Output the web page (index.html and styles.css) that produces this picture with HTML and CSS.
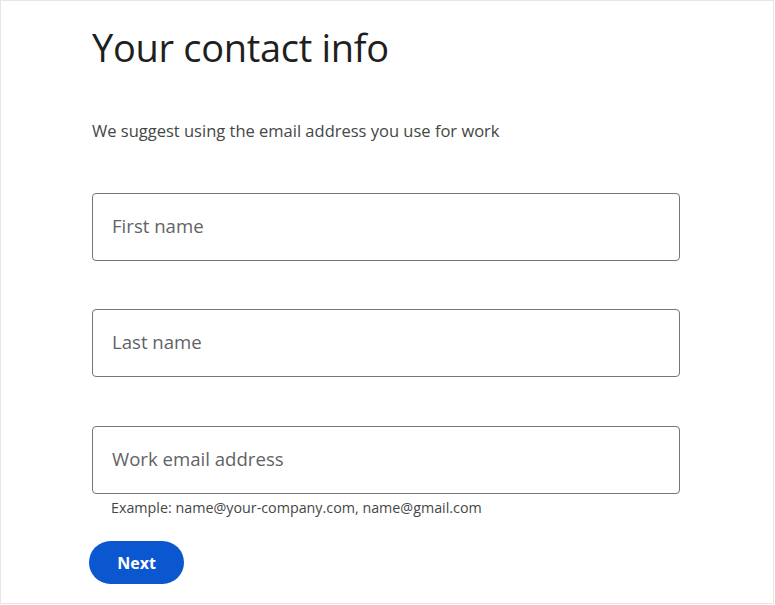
FILE: index.html
```html
<!DOCTYPE html>
<html lang="en">
<head>
<meta charset="utf-8">
<title>Your contact info</title>
<link rel="stylesheet" href="styles.css">
</head>
<body>
<div class="frame">
  <main class="form">
    <h1 class="title">Your contact info</h1>
    <p class="subtitle">We suggest using the email address you use for work</p>
    <div class="fields">
      <div class="field"><input class="input" type="text" placeholder="First name"></div>
      <div class="field"><input class="input" type="text" placeholder="Last name"></div>
      <div class="field field-email">
        <input class="input" type="email" placeholder="Work email address">
        <p class="hint">Example: name@your-company.com, name@gmail.com</p>
      </div>
    </div>
    <button class="next" type="button">Next</button>
  </main>
</div>
</body>
</html>
```
FILE: styles.css
```css
* { box-sizing: border-box; }
html, body { margin: 0; padding: 0; background: #fff; }
body { font-family: "Open Sans", "Liberation Sans", sans-serif; }
.frame {
  width: 774px;
  height: 604px;
  border: 1px solid #e6e6e6;
  overflow: hidden;
}
.form {
  padding: 20px 0 0 91px;
  display: flex;
  flex-direction: column;
}
.title {
  margin: 0;
  font-weight: 400;
  font-size: 38px;
  line-height: 52px;
  color: #1f1f1f;
  letter-spacing: -0.3px;
}
.subtitle {
  margin: 46px 0 0;
  font-size: 16.5px;
  line-height: 24px;
  color: #444746;
}
.fields {
  margin-top: 50px;
  display: flex;
  flex-direction: column;
  gap: 48px;
}
.field { display: flex; flex-direction: column; }
.field-email { margin-top: 1px; }
.input {
  width: 588px;
  height: 68px;
  border: 1px solid #747775;
  border-radius: 4px;
  padding: 0 19px 3px;
  font-family: inherit;
  font-size: 18.6px;
  color: #1f1f1f;
  background: #fff;
  outline: none;
}
.input::placeholder { color: #5f6368; opacity: 1; }
.hint {
  margin: 5px 0 0 19px;
  font-size: 14.3px;
  line-height: 18px;
  color: #444746;
}
.next {
  margin: 24px 0 0 -3px;
  width: 95px;
  height: 43px;
  border: none;
  border-radius: 22px;
  background: #0b57d0;
  color: #fff;
  font-family: inherit;
  font-weight: 700;
  font-size: 16px;
  cursor: pointer;
}
```
